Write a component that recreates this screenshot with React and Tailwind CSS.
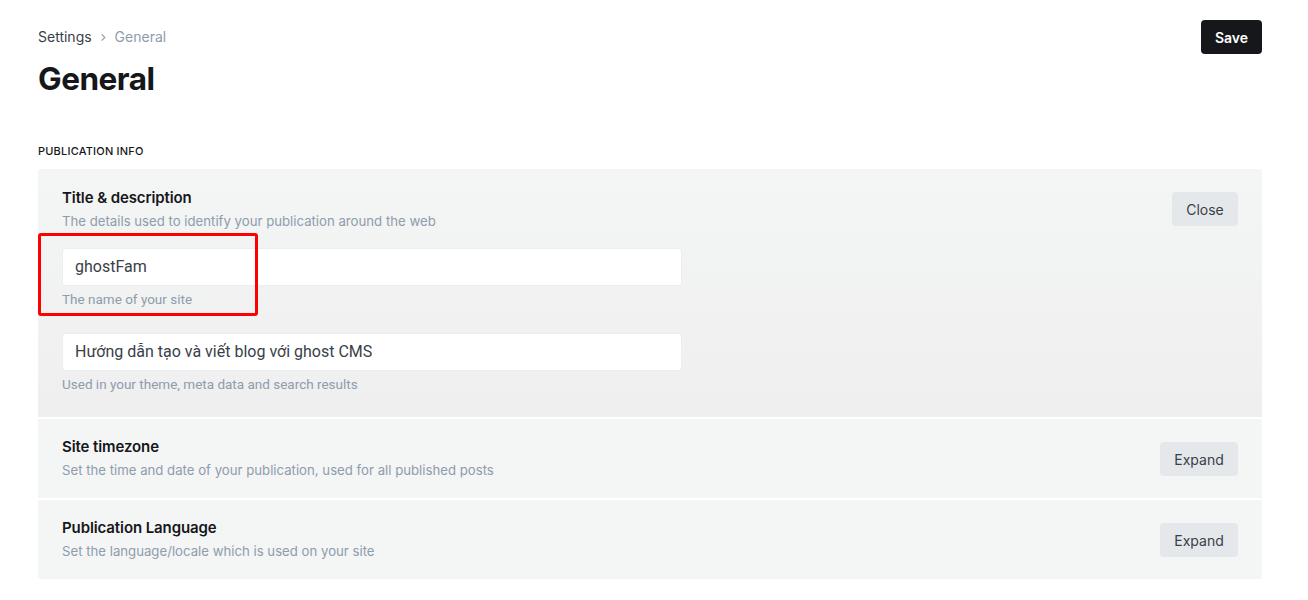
import React from "react";

function Section({ title, desc, button, children, top }) {
  return (
    <div className={`flex items-start justify-between px-6 ${top ? "pt-[19px] pb-[24px] bg-gradient-to-b from-[#f4f5f5] to-[#efefef]" : "pt-[18px] pb-[19px] bg-[#f4f5f5]"}`}>
      <div className="flex-1">
        <div className="text-[15px] font-semibold text-[#15171a] leading-[20px] tracking-[-0.1px]">{title}</div>
        <div className="text-[13.2px] text-[#8e9cac] leading-[18px] mt-[4px]">{desc}</div>
        {children}
      </div>
      <button className={`h-[34px] rounded-[4px] bg-[#e5e8ea] text-[14px] text-[#394047] ${top ? "w-[66px] mt-[4px]" : "w-[78px] mt-[5px]"}`}>
        {button}
      </button>
    </div>
  );
}

function Field({ value, hint }) {
  return (
    <div className="w-[620px]">
      <div className="h-[38px] bg-white border border-[#ebeef0] rounded-[3px] flex items-center px-3 text-[16px] text-[#394047]" style={{ fontFamily: "Roboto, sans-serif" }}>
        {value}
      </div>
      <div className="text-[13.5px] text-[#8e9cac] mt-[4px] leading-[18px]" style={{ fontFamily: "Roboto, sans-serif" }}>{hint}</div>
    </div>
  );
}

export default function App() {
  return (
    <div className="min-h-[600px] bg-white pl-[38px] pr-[46px] pt-[20px]" style={{ fontFamily: "Inter, sans-serif" }}>
      <div className="flex justify-between items-start">
        <div>
          <div className="flex items-center text-[14px] leading-[20px] mt-[7px]">
            <span className="text-[#394047]">Settings</span>
            <svg className="mx-[7px]" width="9" height="9" viewBox="0 0 10 10" fill="none" stroke="#8e9cac" strokeWidth="1.2"><path d="M3 1.5 L6.5 5 L3 8.5" /></svg>
            <span className="text-[#8e9cac]">General</span>
          </div>
          <h1 className="text-[31.5px] font-bold text-[#15171a] leading-[40px] mt-[12px] tracking-[-0.5px]">General</h1>
        </div>
        <button className="h-[34px] w-[61px] rounded-[4px] bg-[#15171a] text-white text-[14px] font-semibold">Save</button>
      </div>

      <div className="mt-[45px] text-[11px] font-medium text-[#15171a] tracking-[0.2px] leading-[14px]">PUBLICATION INFO</div>

      <div className="mt-[11px] rounded-[3px] overflow-hidden flex flex-col gap-[2px] bg-white">
        <Section title="Title & description" desc="The details used to identify your publication around the web" button="Close" top>
          <div className="relative mt-[18px] flex flex-col gap-[25px]">
            <Field value="ghostFam" hint="The name of your site" />
            <Field value="Hướng dẫn tạo và viết blog với ghost CMS" hint="Used in your theme, meta data and search results" />
            <div className="absolute left-[-24px] top-[-15px] w-[220px] h-[83px] border-[3px] border-[#ff0000] rounded-[3px] pointer-events-none"></div>
          </div>
        </Section>
        <Section title="Site timezone" desc="Set the time and date of your publication, used for all published posts" button="Expand" />
        <Section title="Publication Language" desc="Set the language/locale which is used on your site" button="Expand" />
      </div>
    </div>
  );
}
